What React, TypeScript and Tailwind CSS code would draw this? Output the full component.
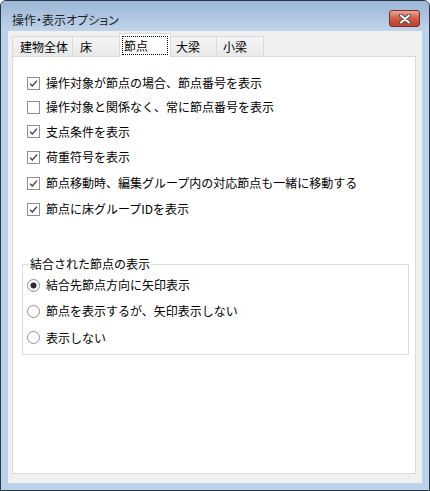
import React from "react";

const font = "font-['Noto_Sans_CJK_JP','Noto_Sans',sans-serif]";

function CheckBox({ checked }: { checked: boolean }) {
  return (
    <svg width="13" height="13" viewBox="0 0 13 13" className="shrink-0">
      <rect x="0.5" y="0.5" width="12" height="12" fill="#fff" stroke="#8e8f8f" />
      {checked && (
        <path d="M3 6.6 L5.3 9 L10 3.6" fill="none" stroke="#3a3a3a" strokeWidth="1.3" />
      )}
    </svg>
  );
}

function Radio({ checked }: { checked: boolean }) {
  return (
    <svg width="13" height="13" viewBox="0 0 13 13" className="shrink-0">
      <circle cx="6.5" cy="6.5" r="6" fill="#fff" stroke="#8e8f8f" />
      {checked && <circle cx="6.5" cy="6.5" r="3" fill="#2e2e2e" />}
    </svg>
  );
}

const options = [
  { label: "操作対象が節点の場合、節点番号を表示", checked: true, h: "h-[24px]" },
  { label: "操作対象と関係なく、常に節点番号を表示", checked: false, h: "h-[24px]" },
  { label: "支点条件を表示", checked: true, h: "h-[25px]" },
  { label: "荷重符号を表示", checked: true, h: "h-[26px]" },
  { label: "節点移動時、編集グループ内の対応節点も一緒に移動する", checked: true, h: "h-[26px]" },
  { label: "節点に床グループIDを表示", checked: true, h: "h-[26px]" },
];

const joined = [
  { label: "結合先節点方向に矢印表示", checked: true, h: "h-[26px]" },
  { label: "節点を表示するが、矢印表示しない", checked: false, h: "h-[26px]" },
  { label: "表示しない", checked: false, h: "h-[27px]" },
];

export default function App() {
  return (
    <div className={`w-[430px] h-[491px] ${font} text-[12px] leading-[16px] text-black`}>
      <div className="w-full h-full flex flex-col rounded-t-[6px] border border-[#2a3744] bg-[#bcd2ea]">
        {/* title bar */}
        <div className="h-[30px] shrink-0 flex justify-between rounded-t-[5px] bg-linear-to-b from-[#9bb6d6] to-[#c0d4ea] pl-[11px] pr-[9px]">
          <span className="mt-[11px] text-[#1e1e1e] [font-feature-settings:'palt']">操作・表示オプション</span>
          <button className="mt-[9px] w-[31px] h-[17px] rounded-[3px] border border-[#7a2d27] bg-linear-to-b from-[#eaa595] via-[#d35a45] to-[#be3f2b] flex items-center justify-center">
            <svg width="14" height="10" viewBox="0 0 14 10">
              <path d="M3 1.5 L11 8.5 M11 1.5 L3 8.5" stroke="#4a4a4a" strokeWidth="4" strokeLinecap="round" />
              <path d="M3 1.5 L11 8.5 M11 1.5 L3 8.5" stroke="#fff" strokeWidth="2" strokeLinecap="round" />
            </svg>
          </button>
        </div>

        {/* client area */}
        <div className="flex-1 mx-[7px] mb-[7px] bg-[#f0f0f0] pl-[4px] pt-[2px]">
          {/* tabs */}
          <div className="h-[23px] flex items-end relative z-10">
            <div className="w-[61px] h-[20px] border border-b-0 border-[#d9d9d9] bg-linear-to-b from-[#f4f4f4] to-[#e9e9e9] pl-[7px] pt-[2px]">
              建物全体
            </div>
            <div className="w-[48px] h-[20px] -ml-px border border-b-0 border-[#d9d9d9] bg-linear-to-b from-[#f4f4f4] to-[#e9e9e9] pl-[7px] pt-[2px]">
              床
            </div>
            <div className="w-[52px] h-[24px] -ml-px -mb-px border border-b-0 border-[#d9d9d9] bg-white p-[2px] relative z-10">
              <div className="h-[19px] border border-dotted border-black pl-[1px] pt-[1px]">節点</div>
            </div>
            <div className="w-[47px] h-[20px] -ml-px border border-b-0 border-[#d9d9d9] bg-linear-to-b from-[#f4f4f4] to-[#e9e9e9] pl-[5px] pt-[2px]">
              大梁
            </div>
            <div className="w-[48px] h-[20px] -ml-px border border-b-0 border-[#d9d9d9] bg-linear-to-b from-[#f4f4f4] to-[#e9e9e9] pl-[6px] pt-[2px]">
              小梁
            </div>
          </div>

          {/* panel */}
          <div className="w-[404px] h-[418px] border border-[#d9d9d9] bg-white pt-[14px]">
            <div className="flex flex-col pl-[14px]">
              {options.map((o) => (
                <div key={o.label} className={`${o.h} flex items-center gap-[6px]`}>
                  <CheckBox checked={o.checked} />
                  <span>{o.label}</span>
                </div>
              ))}
            </div>

            <fieldset className="mt-[34px] ml-[9px] w-[387px] border border-[#dcdcdc] pl-[4px] pb-[3px]">
              <legend className="ml-[2px] px-[1px]">結合された節点の表示</legend>
              {joined.map((o) => (
                <div key={o.label} className={`${o.h} flex items-center gap-[6px]`}>
                  <Radio checked={o.checked} />
                  <span>{o.label}</span>
                </div>
              ))}
            </fieldset>
          </div>
        </div>
      </div>
    </div>
  );
}
